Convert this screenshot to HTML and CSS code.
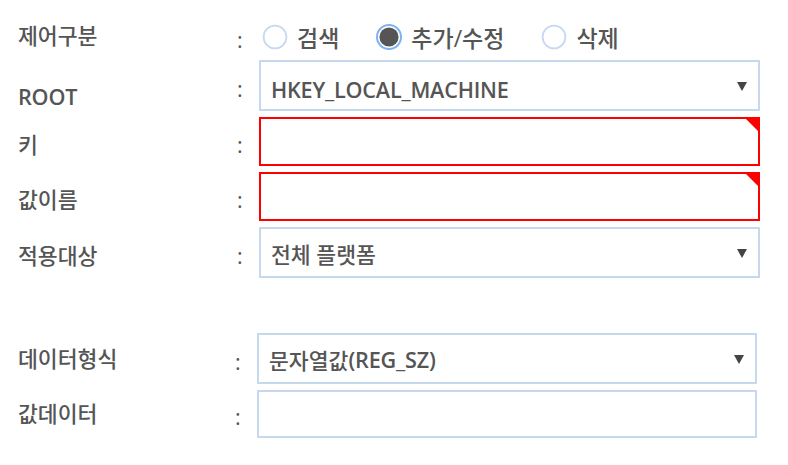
FILE: index.html
```html
<!DOCTYPE html>
<html lang="ko">
<head>
<meta charset="utf-8">
<title>레지스트리 설정</title>
<link rel="stylesheet" href="styles.css">
</head>
<body>
<div class="form">
  <div class="section">
    <div class="row row-radio">
      <div class="label label-mid">제어구분</div>
      <div class="colon">:</div>
      <div class="field radios">
        <label class="radio">
          <svg class="radio-icon" width="26" height="26" viewBox="0 0 26 26"><circle cx="13" cy="13" r="11.4" fill="#fff" stroke="#c6d9f0" stroke-width="1.8"/></svg>
          <span>검색</span>
        </label>
        <label class="radio">
          <svg class="radio-icon" width="26" height="26" viewBox="0 0 26 26"><circle cx="13" cy="13" r="12" fill="#fff" stroke="#7fb2f0" stroke-width="2"/><circle cx="13" cy="13" r="9.6" fill="#555"/></svg>
          <span>추가/수정</span>
        </label>
        <label class="radio">
          <svg class="radio-icon" width="26" height="26" viewBox="0 0 26 26"><circle cx="13" cy="13" r="11.4" fill="#fff" stroke="#c6d9f0" stroke-width="1.8"/></svg>
          <span>삭제</span>
        </label>
      </div>
    </div>
    <div class="row">
      <div class="label label-low"><span class="latin">ROOT</span></div>
      <div class="colon">:</div>
      <div class="field box select select-latin"><span class="latin">HKEY_LOCAL_MACHINE</span><span class="caret"></span></div>
    </div>
    <div class="row">
      <div class="label">키</div>
      <div class="colon">:</div>
      <div class="field box input required"></div>
    </div>
    <div class="row">
      <div class="label">값이름</div>
      <div class="colon">:</div>
      <div class="field box input required"></div>
    </div>
    <div class="row">
      <div class="label">적용대상</div>
      <div class="colon">:</div>
      <div class="field box select">전체 플랫폼<span class="caret"></span></div>
    </div>
  </div>
  <div class="section section-data">
    <div class="row">
      <div class="label label-up">데이터형식</div>
      <div class="colon">:</div>
      <div class="field box select">문자열값<span class="latin">(REG_SZ)</span><span class="caret"></span></div>
    </div>
    <div class="row">
      <div class="label label-up">값데이터</div>
      <div class="colon">:</div>
      <div class="field box input input-short"></div>
    </div>
  </div>
</div>
</body>
</html>
```
FILE: styles.css
```css
* { box-sizing: border-box; }
html, body { margin: 0; padding: 0; background: #fff; }
body {
  font-family: "Open Sans", "Noto Sans CJK KR", sans-serif;
  font-size: 21.6px;
  color: #555;
  font-weight: 500;
}
.latin { font-weight: 600; letter-spacing: -0.2px; }
.form {
  padding: 19px 0 0 18px;
  display: flex;
  flex-direction: column;
  gap: 55px;
}
.section {
  display: flex;
  flex-direction: column;
  gap: 6px;
}
.row {
  display: grid;
  grid-template-columns: 219px 22px 501px;
  align-items: center;
}
.section-data .row { grid-template-columns: 217px 22px 500px; }
.row-radio { height: 35px; }
.label { white-space: nowrap; padding-top: 3px; }
.label-mid { padding-top: 0; padding-bottom: 4px; }
.label-up { padding-top: 0; padding-bottom: 3px; }
.label-low { padding-top: 22px; }
.colon { padding-top: 5px; }
.radios {
  display: flex;
  align-items: center;
  padding-left: 3px;
  font-size: 23px;
}
.radio {
  display: flex;
  align-items: center;
  gap: 9px;
  margin-right: 37px;
}
.radio-icon { display: block; flex: none; }
.box {
  position: relative;
  border: 2px solid #c6d8ee;
  background: #fff;
  height: 51px;
  padding: 2px 40px 0 10px;
  display: flex;
  align-items: center;
  white-space: nowrap;
}
.select-latin { padding-top: 8px; }
.input { height: 49px; }
.input-short { height: 48px; }
.required { border-color: #f00; }
.required::after {
  content: "";
  position: absolute;
  top: 0;
  right: 0;
  border-top: 12px solid #f00;
  border-left: 12px solid transparent;
}
.caret {
  position: absolute;
  right: 11px;
  top: 50%;
  margin-top: -4px;
  border-top: 9px solid #444;
  border-left: 5.5px solid transparent;
  border-right: 5.5px solid transparent;
}
```
